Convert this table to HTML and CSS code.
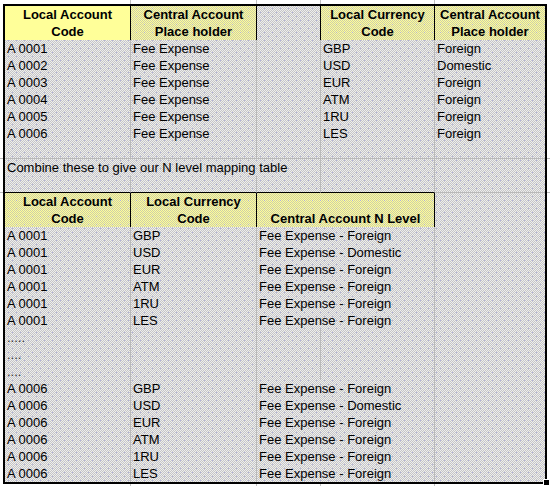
FILE: index.html
```html
<!DOCTYPE html>
<html>
<head>
<meta charset="utf-8">
<link rel="stylesheet" href="styles.css">
</head>
<body>
<div class="sheet">
  <div class="row strip-top"><div class="stub"></div><div></div><div></div><div></div><div></div><div class="e"></div><div class="stub"></div></div>

  <div class="row tall">
    <div class="stub"></div>
    <div class="h active">Local Account<br>Code</div>
    <div class="h">Central Account<br>Place holder</div>
    <div class="dk-r"></div>
    <div class="h">Local Currency<br>Code</div>
    <div class="h e">Central Account<br>Place holder</div>
    <div class="stub"></div>
  </div>
  <div class="row"><div class="stub"></div><div>A 0001</div><div>Fee Expense</div><div></div><div>GBP</div><div class="e">Foreign</div><div class="stub"></div></div>
  <div class="row"><div class="stub"></div><div>A 0002</div><div>Fee Expense</div><div></div><div>USD</div><div class="e">Domestic</div><div class="stub"></div></div>
  <div class="row"><div class="stub"></div><div>A 0003</div><div>Fee Expense</div><div></div><div>EUR</div><div class="e">Foreign</div><div class="stub"></div></div>
  <div class="row"><div class="stub"></div><div>A 0004</div><div>Fee Expense</div><div></div><div>ATM</div><div class="e">Foreign</div><div class="stub"></div></div>
  <div class="row"><div class="stub"></div><div>A 0005</div><div>Fee Expense</div><div></div><div>1RU</div><div class="e">Foreign</div><div class="stub"></div></div>
  <div class="row"><div class="stub"></div><div>A 0006</div><div>Fee Expense</div><div></div><div>LES</div><div class="e">Foreign</div><div class="stub"></div></div>
  <div class="row"><div class="stub"></div><div></div><div></div><div></div><div></div><div class="e"></div><div class="stub"></div></div>
  <div class="row"><div class="stub"></div><div class="span3">Combine these to give our N level mapping table</div><div></div><div class="e"></div><div class="stub"></div></div>
  <div class="row"><div class="stub"></div><div class="dk-b"></div><div class="dk-b"></div><div class="dk-b"></div><div class="dk-b"></div><div class="e"></div><div class="stub"></div></div>

  <div class="row tall">
    <div class="stub"></div>
    <div class="h">Local Account<br>Code</div>
    <div class="h">Local Currency<br>Code</div>
    <div class="h span2">Central Account N Level</div>
    <div class="e"></div>
    <div class="stub"></div>
  </div>
  <div class="row"><div class="stub"></div><div>A 0001</div><div>GBP</div><div class="span2">Fee Expense - Foreign</div><div class="e"></div><div class="stub"></div></div>
  <div class="row"><div class="stub"></div><div>A 0001</div><div>USD</div><div class="span2">Fee Expense - Domestic</div><div class="e"></div><div class="stub"></div></div>
  <div class="row"><div class="stub"></div><div>A 0001</div><div>EUR</div><div class="span2">Fee Expense - Foreign</div><div class="e"></div><div class="stub"></div></div>
  <div class="row"><div class="stub"></div><div>A 0001</div><div>ATM</div><div class="span2">Fee Expense - Foreign</div><div class="e"></div><div class="stub"></div></div>
  <div class="row"><div class="stub"></div><div>A 0001</div><div>1RU</div><div class="span2">Fee Expense - Foreign</div><div class="e"></div><div class="stub"></div></div>
  <div class="row"><div class="stub"></div><div>A 0001</div><div>LES</div><div class="span2">Fee Expense - Foreign</div><div class="e"></div><div class="stub"></div></div>
  <div class="row"><div class="stub"></div><div class="dots">.....</div><div></div><div></div><div></div><div class="e"></div><div class="stub"></div></div>
  <div class="row"><div class="stub"></div><div class="dots">....</div><div></div><div></div><div></div><div class="e"></div><div class="stub"></div></div>
  <div class="row"><div class="stub"></div><div class="dots">....</div><div></div><div></div><div></div><div class="e"></div><div class="stub"></div></div>
  <div class="row"><div class="stub"></div><div>A 0006</div><div>GBP</div><div class="span2">Fee Expense - Foreign</div><div class="e"></div><div class="stub"></div></div>
  <div class="row"><div class="stub"></div><div>A 0006</div><div>USD</div><div class="span2">Fee Expense - Domestic</div><div class="e"></div><div class="stub"></div></div>
  <div class="row"><div class="stub"></div><div>A 0006</div><div>EUR</div><div class="span2">Fee Expense - Foreign</div><div class="e"></div><div class="stub"></div></div>
  <div class="row"><div class="stub"></div><div>A 0006</div><div>ATM</div><div class="span2">Fee Expense - Foreign</div><div class="e"></div><div class="stub"></div></div>
  <div class="row"><div class="stub"></div><div>A 0006</div><div>1RU</div><div class="span2">Fee Expense - Foreign</div><div class="e"></div><div class="stub"></div></div>
  <div class="row"><div class="stub"></div><div>A 0006</div><div>LES</div><div class="span2">Fee Expense - Foreign</div><div class="e"></div><div class="stub"></div></div>

  <div class="row strip-bottom"><div class="stub"></div><div></div><div></div><div></div><div></div><div class="e"></div><div class="stub"></div></div>

  <div class="sel"></div>
  <div class="handle"></div>
</div>
</body>
</html>
```

FILE: styles.css
```css
body {
  margin: 0;
  background: #fff;
}

.sheet {
  position: relative;
  width: 550px;
  height: 486px;
  overflow: hidden;
  background: #fff;
  font-family: "Liberation Sans", Arial, sans-serif;
  font-size: 13px;
  color: #000;
}

.row {
  display: grid;
  grid-template-columns: 5px 126px 126px 64px 114px 110px 5px;
  height: 17px;
}

.row > div {
  box-sizing: border-box;
  border-right: 1px solid #b9b9b9;
  border-bottom: 1px solid #b9b9b9;
  padding: 1px 2px 0;
  line-height: 16px;
  white-space: nowrap;
  overflow: visible;
  background:
    conic-gradient(from 270deg at 1px 1px, #b0b0de 25%, transparent 0) 0 0 / 8px 8px,
    conic-gradient(from 270deg at 1px 1px, #b0b0de 25%, transparent 0) 4px 4px / 8px 8px,
    repeating-conic-gradient(#c6c6c6 0 25%, #eeeeee 0 50%) 0 0 / 2px 2px;
  background-attachment: fixed;
}

.row > .stub {
  background: #fff;
  border-right: none;
  padding: 0;
}

.row > .e {
  border-right: none;
}

.row.tall {
  height: 34px;
}

.strip-top {
  height: 6px !important;
}

.strip-bottom {
  height: 4px !important;
}

.strip-top > div,
.strip-bottom > div {
  background: #fff;
  border-bottom: none;
  border-right-color: #c0c0c0;
  padding: 0;
}

.span2 {
  grid-column: span 2;
}

.span3 {
  grid-column: span 3;
}

.dk-r {
  border-right-color: #000 !important;
}

.dk-b {
  border-bottom-color: #000 !important;
}

.row > .h {
  display: flex;
  flex-direction: column;
  justify-content: flex-end;
  align-items: center;
  text-align: center;
  font-weight: bold;
  line-height: 17px;
  padding: 0 0 0 0;
  border-right-color: #000;
  border-bottom-color: #000;
  background:
    conic-gradient(from 270deg at 1px 1px, #b0b0de 25%, transparent 0) 0 0 / 8px 8px,
    repeating-conic-gradient(#ffff99 0 25%, #cdcda8 0 50%) 0 0 / 2px 2px;
  background-attachment: fixed;
}

.row > .h.active {
  background: #ffff99;
}

.dots {
  color: #333;
}

.sel {
  position: absolute;
  left: 3px;
  top: 4px;
  width: 544px;
  height: 480px;
  box-sizing: border-box;
  border: 2px solid #000;
  pointer-events: none;
}

.handle {
  position: absolute;
  left: 544px;
  top: 480px;
  width: 5px;
  height: 5px;
  background: #000;
  box-shadow: 0 0 0 1px #fff;
}
```
